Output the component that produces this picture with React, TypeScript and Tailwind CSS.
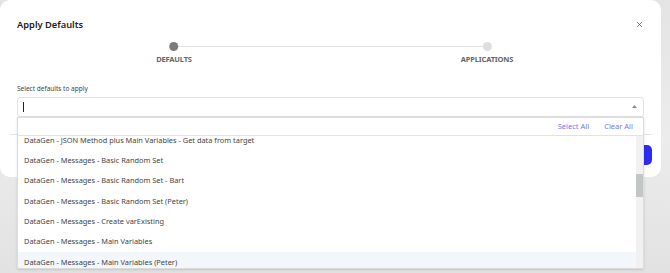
import { X } from "lucide-react";

const items = [
  "DataGen - JSON Method plus Main Variables - Get data from target",
  "DataGen - Messages - Basic Random Set",
  "DataGen - Messages - Basic Random Set - Bart",
  "DataGen - Messages - Basic Random Set (Peter)",
  "DataGen - Messages - Create varExisting",
  "DataGen - Messages - Main Variables",
  "DataGen - Messages - Main Variables (Peter)",
];

export default function App() {
  return (
    <div
      className="relative w-[670px] h-[273px] overflow-hidden bg-gradient-to-b from-[#e4e4e4] via-[#ececec] to-[#e2e2e2]"
      style={{ fontFamily: '"Noto Sans", "Open Sans", sans-serif' }}
    >
      {/* Modal */}
      <div className="relative w-[661px] h-[177px] bg-white rounded-[10px] flex flex-col">
        {/* Header */}
        <div className="flex items-center justify-between pl-[17px] pr-[17px] pt-[16px] h-[33px]">
          <h2 className="text-[9.3px] font-semibold text-[#222] leading-none">Apply Defaults</h2>
          <X size={9} strokeWidth={2} className="text-[#555]" />
        </div>

        {/* Stepper */}
        <div className="relative h-[36px] mt-[8px]">
          <div className="absolute left-[174px] top-[5px] w-[313px] h-px bg-[#e3e3e3]" />
          <div className="absolute left-[174px] top-[1px] -translate-x-1/2 flex flex-col items-center">
            <span className="w-[9px] h-[9px] rounded-full bg-[#7b7b7b]" />
            <span className="mt-[3px] text-[7.5px] font-bold text-[#666] tracking-tight">DEFAULTS</span>
          </div>
          <div className="absolute left-[487px] top-[1px] -translate-x-1/2 flex flex-col items-center">
            <span className="w-[9px] h-[9px] rounded-full bg-[#dedede]" />
            <span className="mt-[3px] text-[7.5px] font-bold text-[#666] tracking-tight">APPLICATIONS</span>
          </div>
        </div>

        {/* Field */}
        <div className="px-[17px] pt-[9px]">
          <div className="text-[6.5px] text-[#444] leading-none mb-[4px]">Select defaults to apply</div>
          <div className="h-[20px] w-[627px] border border-[#e2e2e2] rounded-[3px] flex items-center justify-between pl-[5px] pr-[6px]">
            <span className="w-px h-[10px] bg-[#222]" />
            <svg width="5" height="3" viewBox="0 0 5 3" className="text-[#888]">
              <path d="M2.5 0 L5 3 L0 3 Z" fill="currentColor" />
            </svg>
          </div>
        </div>

        {/* Footer */}
        <div className="mt-auto mb-[12px] ml-[10px] mr-[10px] border-t border-[#e2e2e2] pt-[10px] flex justify-end">
          <button className="w-[80px] h-[20px] rounded-[5px] bg-[#2d2df2] -mr-[1px]" />
        </div>
      </div>

      {/* Dropdown menu */}
      <div className="absolute left-[17px] top-[117px] w-[627px] h-[152px] bg-white border border-[#dcdcdc] shadow-sm flex flex-col">
        <div className="h-[18px] border-b border-[#e2e2e2] flex items-center justify-end gap-[15px] pr-[10px] text-[7.5px] text-[#7575ee]">
          <span>Select All</span>
          <span>Clear All</span>
        </div>
        <div className="relative flex-1 overflow-hidden">
          <div className="-mt-[6px] pr-[7px]">
            {items.map((item, i) => (
              <div
                key={item}
                className={`h-[20.33px] flex items-center pl-[6px] text-[7.4px] text-[#444] ${
                  i === items.length - 1 ? "bg-[#f3f7fc]" : ""
                }`}
              >
                {item}
              </div>
            ))}
          </div>
          {/* Scrollbar */}
          <div className="absolute right-0 top-0 bottom-0 w-[7px] bg-[#f1f1f1]">
            <div className="absolute left-0 right-0 top-[38px] h-[23px] bg-[#c2c6c6]" />
          </div>
        </div>
      </div>
    </div>
  );
}
